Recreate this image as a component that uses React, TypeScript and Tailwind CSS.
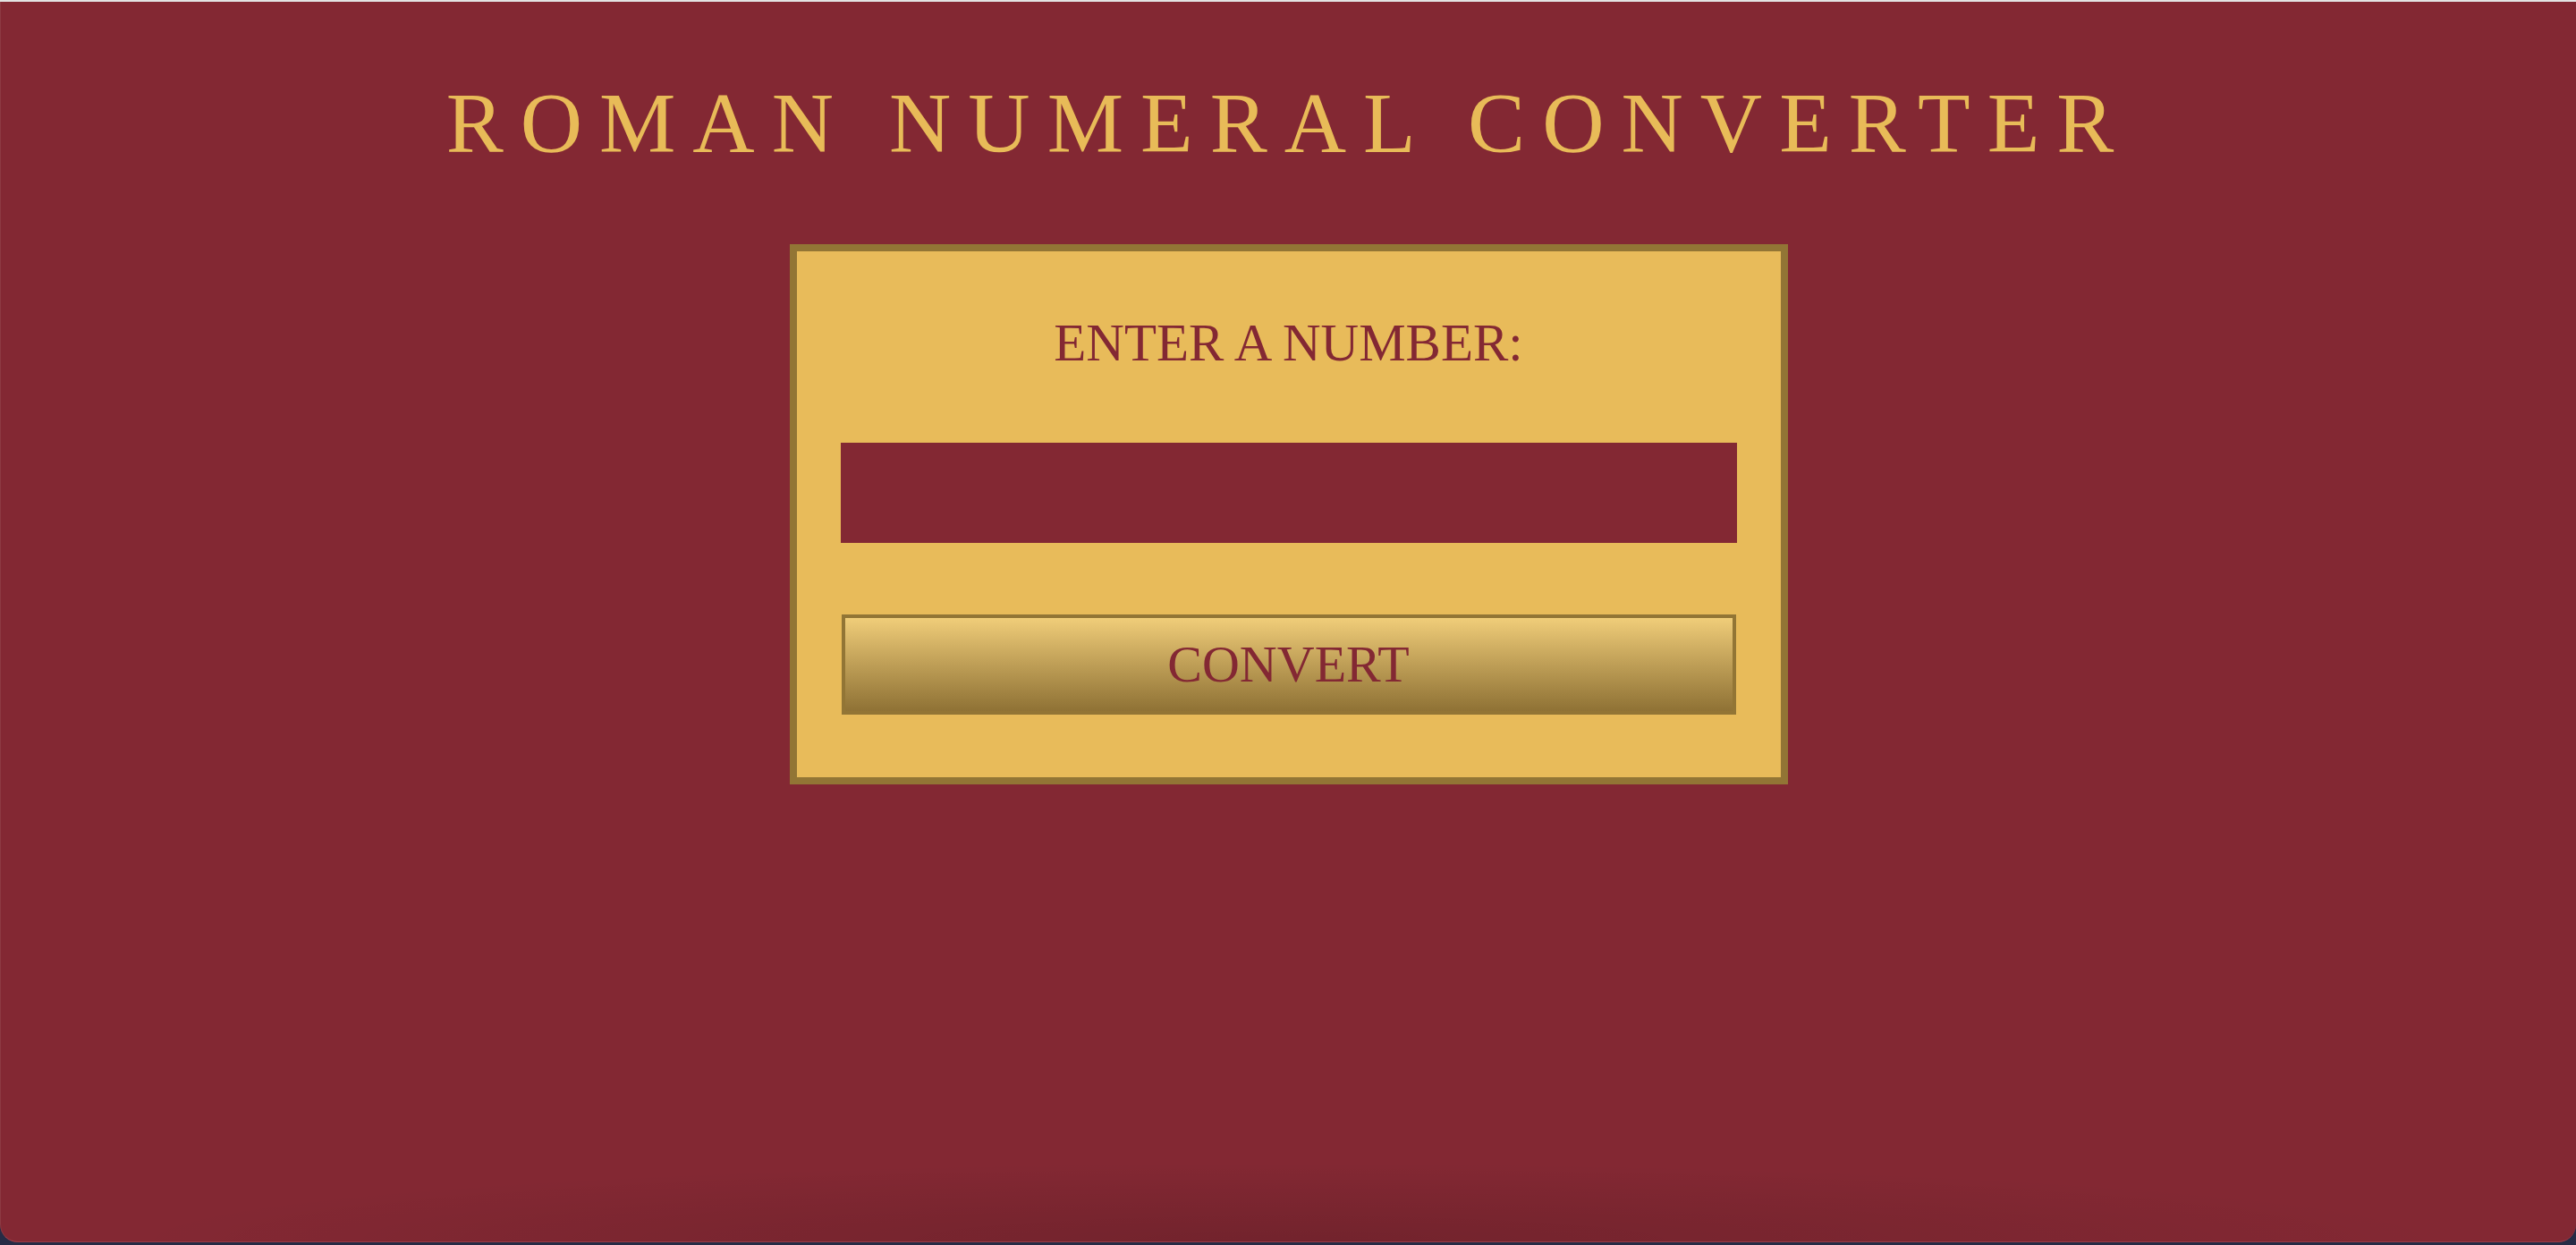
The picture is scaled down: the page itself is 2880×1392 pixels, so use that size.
import { useState } from "react";

const serif = { fontFamily: '"Liberation Serif", "Times New Roman", serif' };

const App = () => {
  const [value, setValue] = useState("");

  return (
    <div className="h-[1392px] w-full bg-[#262b45] flex flex-col" style={serif}>
      <div className="h-[2px] bg-[#e3e3e3]"></div>
      <main className="relative flex-1 mb-[3px] bg-[#832833] border-l border-l-[#8c3a42] border-b border-b-[#9c3c47] rounded-b-[20px] overflow-hidden flex flex-col items-center">
        <h1 className="mt-[88px] text-[96px] leading-none tracking-[19px] text-[#e8bb58] uppercase">
          Roman Numeral Converter
        </h1>

        <section className="mt-[87px] w-[1116px] border-[8px] border-[#927535] bg-[#e8bb5a] px-[49px] pt-[73px] pb-[70px] flex flex-col">
          <label htmlFor="number" className="text-center text-[59px] leading-none text-[#832833] uppercase">
            Enter a number:
          </label>
          <input
            id="number"
            type="number"
            value={value}
            onChange={(e) => setValue(e.target.value)}
            className="mt-[82px] h-[112px] w-full bg-[#832833] text-[#e8bb58] text-[48px] px-4 outline-none border-none"
          />
          <button
            type="button"
            className="mt-[80px] mx-[1px] h-[112px] border-[4px] border-[#927535] bg-linear-to-b from-[#f0cd79] to-[#8f7235] text-[58px] leading-none text-[#832833] uppercase flex items-center justify-center"
          >
            Convert
          </button>
        </section>

        <div className="pointer-events-none absolute bottom-0 inset-x-[120px] h-[90px] bg-[radial-gradient(ellipse_at_bottom,rgba(0,0,0,0.13),transparent_70%)]"></div>
      </main>
    </div>
  );
};

export default App;
